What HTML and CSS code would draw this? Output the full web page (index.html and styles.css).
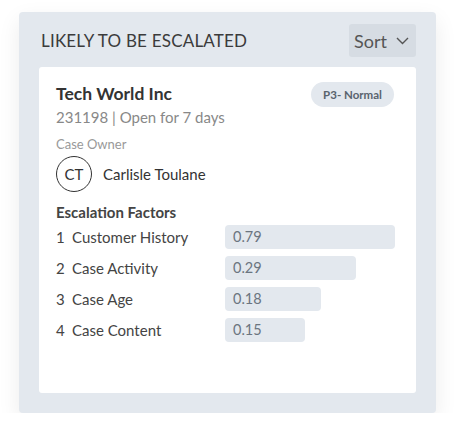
FILE: index.html
```html
<!DOCTYPE html>
<html lang="en">
<head>
    <meta charset="UTF-8">
    <meta name="viewport" content="width=device-width, initial-scale=1.0">
    <title>Likely to be Escalated</title>
    <link rel="stylesheet" href="styles.css">
</head>
<body>

<section class="panel">
    <header class="panel-head">
        <h2 class="panel-title">LIKELY TO BE ESCALATED</h2>
        <button class="sort-btn">Sort
            <svg width="13" height="8" viewBox="0 0 13 8"><path d="M1 1l5.5 5.5L12 1" fill="none" stroke="#555" stroke-width="1.4"/></svg>
        </button>
    </header>

    <div class="card">
        <div class="card-top">
            <div>
                <div class="account">Tech World Inc</div>
                <div class="meta">231198 | Open for 7 days</div>
            </div>
            <span class="badge">P3- Normal</span>
        </div>

        <div class="owner-label">Case Owner</div>
        <div class="owner">
            <span class="avatar">CT</span>
            <span class="owner-name">Carlisle Toulane</span>
        </div>

        <div class="factors-title">Escalation Factors</div>
        <div class="factors">
            <div class="factor-name"><span class="num">1</span>Customer History</div>
            <div class="bar" style="width: 170px;">0.79</div>
            <div class="factor-name"><span class="num">2</span>Case Activity</div>
            <div class="bar" style="width: 131px;">0.29</div>
            <div class="factor-name"><span class="num">3</span>Case Age</div>
            <div class="bar" style="width: 96px;">0.18</div>
            <div class="factor-name"><span class="num">4</span>Case Content</div>
            <div class="bar" style="width: 80px;">0.15</div>
        </div>
    </div>
</section>

</body>
</html>
```

FILE: styles.css
```css
body {
    font-family: 'Lato', 'Open Sans', sans-serif;
    margin: 0;
    padding: 0;
    background-color: #fff;
}

.panel {
    width: 417px;
    height: 401px;
    margin: 12px 0 0 19px;
    padding: 12px 20px 20px 20px;
    box-sizing: border-box;
    background-color: #e3e8ee;
    border-radius: 4px;
    box-shadow: 0 8px 22px rgba(0, 0, 0, 0.08);
}

.panel-head {
    display: flex;
    justify-content: space-between;
    align-items: center;
    height: 33px;
    margin-bottom: 10px;
}

.panel-title {
    margin: 0 0 0 2px;
    font-size: 17px;
    font-weight: normal;
    color: #3b3b3b;
    letter-spacing: 0.2px;
}

.sort-btn {
    display: flex;
    align-items: center;
    gap: 9px;
    height: 33px;
    width: 67px;
    padding: 0 0 0 5px;
    border: none;
    border-radius: 3px;
    background-color: #d6dce3;
    font-family: inherit;
    font-size: 18px;
    color: #555;
}

.card {
    height: 326px;
    box-sizing: border-box;
    padding: 15px 22px 0 17px;
    background-color: #fff;
    border-radius: 3px;
}

.card-top {
    display: flex;
    justify-content: space-between;
    align-items: flex-start;
}

.account {
    font-size: 17.5px;
    font-weight: bold;
    line-height: 24px;
    color: #333;
}

.meta {
    margin-top: 1px;
    font-size: 15px;
    line-height: 20px;
    color: #888;
}

.badge {
    height: 25px;
    line-height: 25px;
    width: 83px;
    text-align: center;
    border-radius: 13px;
    background-color: #e3e8ee;
    font-size: 11.5px;
    font-weight: bold;
    color: #59636d;
}

.owner-label {
    margin-top: 9px;
    font-size: 13px;
    line-height: 16px;
    color: #999;
}

.owner {
    display: flex;
    align-items: center;
    gap: 11px;
    margin-top: 4px;
}

.avatar {
    width: 36px;
    height: 36px;
    box-sizing: border-box;
    border: 1.4px solid #333;
    border-radius: 50%;
    display: flex;
    align-items: center;
    justify-content: center;
    font-size: 15px;
    color: #333;
}

.owner-name {
    font-size: 15px;
    color: #333;
}

.factors-title {
    margin-top: 10px;
    font-size: 15px;
    font-weight: bold;
    line-height: 20px;
    color: #444;
}

.factors {
    display: grid;
    grid-template-columns: 169px 1fr;
    row-gap: 7px;
    margin-top: 3px;
}

.factor-name {
    display: flex;
    align-items: center;
    height: 24px;
    font-size: 15px;
    color: #444;
}

.num {
    width: 16px;
}

.bar {
    height: 24px;
    line-height: 24px;
    padding-left: 8px;
    box-sizing: border-box;
    border-radius: 4px;
    background-color: #e3e8ee;
    font-size: 14.5px;
    color: #6b7580;
}
```
